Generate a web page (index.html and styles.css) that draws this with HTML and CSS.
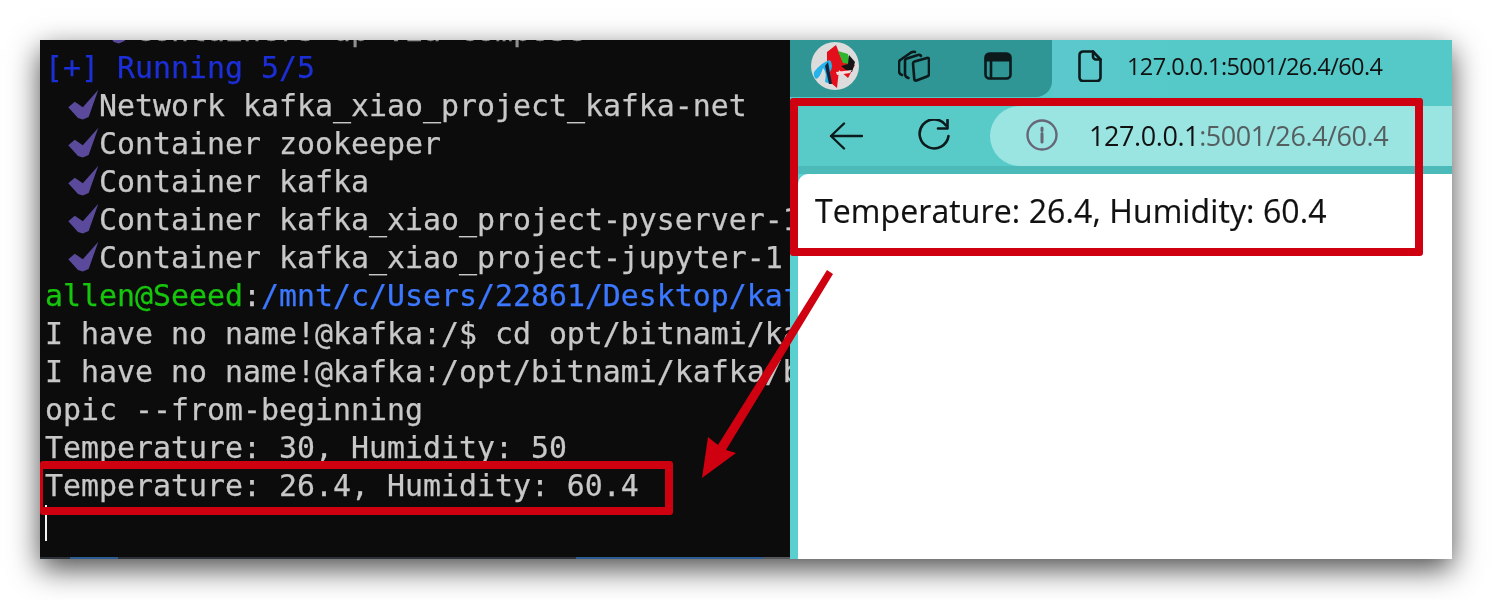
FILE: index.html
```html
<!DOCTYPE html>
<html lang="en">
<head>
<meta charset="utf-8">
<title>Kafka terminal and browser result</title>
<link rel="stylesheet" href="styles.css">
</head>
<body>
<main class="shot">
  <section class="terminal">
    <div class="lines">
      <div class="line clip-top indent"><svg class="check" viewBox="0 0 32 38"><polygon points="0.3,20.3 7,14.7 15.3,20.3 31.3,2.3 21.3,30.3 15.3,33 10.3,31.3"/></svg><span class="sliver">Containers up via compose</span></div>
      <div class="line run">[+] Running 5/5</div>
      <div class="line item"><svg class="check" viewBox="0 0 32 38"><polygon points="0.3,20.3 7,14.7 15.3,20.3 31.3,2.3 21.3,30.3 15.3,33 10.3,31.3"/></svg><span>Network kafka_xiao_project_kafka-net</span></div>
      <div class="line item"><svg class="check" viewBox="0 0 32 38"><polygon points="0.3,20.3 7,14.7 15.3,20.3 31.3,2.3 21.3,30.3 15.3,33 10.3,31.3"/></svg><span>Container zookeeper</span></div>
      <div class="line item"><svg class="check" viewBox="0 0 32 38"><polygon points="0.3,20.3 7,14.7 15.3,20.3 31.3,2.3 21.3,30.3 15.3,33 10.3,31.3"/></svg><span>Container kafka</span></div>
      <div class="line item"><svg class="check" viewBox="0 0 32 38"><polygon points="0.3,20.3 7,14.7 15.3,20.3 31.3,2.3 21.3,30.3 15.3,33 10.3,31.3"/></svg><span>Container kafka_xiao_project-pyserver-1</span></div>
      <div class="line item"><svg class="check" viewBox="0 0 32 38"><polygon points="0.3,20.3 7,14.7 15.3,20.3 31.3,2.3 21.3,30.3 15.3,33 10.3,31.3"/></svg><span>Container kafka_xiao_project-jupyter-1</span></div>
      <div class="line"><span class="green">allen@Seeed</span>:<span class="blue">/mnt/c/Users/22861/Desktop/kafka_xiao_project</span></div>
      <div class="line">I have no name!@kafka:/$ cd opt/bitnami/kafka/bin</div>
      <div class="line">I have no name!@kafka:/opt/bitnami/kafka/bin$ ./kafka-console-consumer.sh</div>
      <div class="line">opic --from-beginning</div>
      <div class="line">Temperature: 30, Humidity: 50</div>
      <div class="line">Temperature: 26.4, Humidity: 60.4</div>
      <div class="line"><span class="cursor"></span></div>
    </div>
    <div class="taskbar-edge"></div>
  </section>

  <section class="browser">
    <header class="titlebar">
      <div class="tab-group">
        <svg class="avatar" viewBox="0 0 50 48">
          <circle cx="25" cy="24" r="24" fill="#dcdcdc"/>
          <path d="M17 10 L26 3 L32 18 L45 23 L38 36 L29 28 L27 46 L21 41 L17 20Z" fill="#e3101c"/>
          <path d="M28 9 L38 12 L40 22 L33 21Z" fill="#2fb52f"/>
          <path d="M39 13 L45 20 L42 30 L36 28 L31 24 L38 22Z" fill="#151515"/>
          <path d="M4 30 Q12 20 20 18 Q24 24 20 30 L21 42 L15 40 Q17 30 13 26 Q10 36 6 37 Q3 34 4 30Z" fill="#24b4ea"/>
          <path d="M18 20 L22 42 L19 42 L15 24Z" fill="#14233a"/>
          <path d="M26 30 L42 28 L40 31 L27 33Z" fill="#f4dede"/>
        </svg>
        <svg class="stack" viewBox="0 0 32 32" fill="none">
          <path d="M15 13.5 Q15 12 16.5 11.5 L29 8 Q31 7.500 31 9.500 V24 Q31 26 29 26.500 L18.500 30.500 Q16.500 31 16.300 29 Z"/>
          <path d="M10.500 28 Q7 27 7 24 V11 Q7 9 9 8.500 L20 5 Q22.500 4.500 23 6"/>
          <path d="M4 25 Q1 24 1 21 V13 Q1 10 3 9.500 L13 2.500 Q15.500 1.200 17 2"/>
        </svg>
        <svg class="win" viewBox="0 0 28 28" fill="none">
          <rect x="1.500" y="1.500" width="25" height="25" rx="4"/>
          <path class="win-fill" d="M1.500 6 a4.500 4.500 0 0 1 4.500-4.500 h16 a4.500 4.500 0 0 1 4.500 4.500 v3 h-25z"/>
          <path d="M7 9 V26"/>
        </svg>
      </div>
      <div class="tab">
        <svg class="doc" viewBox="0 0 24 32" fill="none">
          <path d="M5 1.500 H15 L22.500 9.500 V27.500 a3.500 3.500 0 0 1-3.500 3.500 H5 a3.500 3.500 0 0 1-3.500-3.500 V5 a3.500 3.500 0 0 1 3.500-3.500z"/>
          <path d="M15 1.500 V6.500 a3 3 0 0 0 3 3 h4.500"/>
        </svg>
        <span class="tab-title">127.0.0.1:5001/26.4/60.4</span>
      </div>
    </header>
    <nav class="toolbar">
      <svg class="back" viewBox="0 0 34 28" fill="none"><path d="M33 14 H2 M15 1.500 L2 14 L15 26.500"/></svg>
      <svg class="reload" viewBox="0 0 34 32" fill="none"><path d="M29 6.500 A14.500 14.500 0 1 0 31.500 17"/><path d="M30.500 1 V9.500 H21"/></svg>
      <div class="omnibox">
        <svg class="info" viewBox="0 0 32 32" fill="none"><circle cx="16" cy="16" r="14.500"/><path d="M16 14.500 V23 M16 9 V11.500"/></svg>
        <span class="url"><span class="host">127.0.0.1</span>:5001/26.4/60.4</span>
      </div>
    </nav>
    <div class="viewport">
      <p class="page">Temperature: 26.4, Humidity: 60.4</p>
    </div>
  </section>

  <div class="mark mark-term"></div>
  <div class="mark mark-page"></div>
  <svg class="arrow" viewBox="0 0 140 215"><polygon points="127,1 133,5 26,181 36,184 2,209 8,168 18,176"/></svg>
</main>
</body>
</html>
```

FILE: styles.css
```css
* { box-sizing: border-box; }
html, body { margin: 0; height: 100%; background: #fff; overflow: hidden; }
body { padding: 40px; }

.shot {
  position: relative;
  display: flex;
  width: 1412px;
  height: 519px;
  box-shadow: 0 10px 28px rgba(0, 0, 0, .7);
}

/* terminal */
.terminal {
  width: 750px;
  display: flex;
  flex-direction: column;
  background: #0c0c0c;
  overflow: hidden;
  font: 29.9px/38px "DejaVu Sans Mono", monospace;
  color: #c8c8c8;
  -webkit-text-stroke: .25px currentColor;
}
.lines {
  flex: 1;
  min-height: 0;
  margin-top: -29px;
  padding-left: 5px;
  filter: blur(.5px);
}
.line { height: 38px; white-space: pre; display: flex; }
.line > span { flex: none; }
.sliver { transform: translateY(.5px); opacity: .7; }
.run { color: #1c2fd6; }
.green { color: #16c60c; }
.blue { color: #3b78ff; }
.item { padding-left: 23px; }
.indent { padding-left: 59px; }
.check { width: 31px; height: 38px; flex: none; overflow: visible; fill: #5b4a9c; }
.cursor { width: 2px; height: 36px; background: #f2f2f2; }
.taskbar-edge {
  height: 2px;
  flex: none;
  background: linear-gradient(90deg, #2d3338 0 30px, #2c5c94 30px 78px, #2d3338 78px 536px, #2c5c94 536px 723px, #55585a 723px);
}

/* browser */
.browser {
  flex: 1;
  display: flex;
  flex-direction: column;
  background: #59cfd0;
  font-family: "Open Sans", sans-serif;
  color: #111;
}
.titlebar { display: flex; height: 66px; flex: none; background: #55c9c8; }
.tab-group {
  width: 262px;
  height: 57px;
  flex: none;
  display: flex;
  align-items: center;
  padding: 0 0 5px 20px;
  background: #2f9595;
  border-bottom-right-radius: 16px;
}
.avatar { width: 50px; height: 48px; flex: none; }
.stack { width: 32px; height: 32px; flex: none; margin-left: 38px; }
.stack path, .win rect, .win path, .doc path, .back path, .reload path {
  stroke: #0d1a1c;
  stroke-width: 2.6;
  stroke-linecap: round;
  stroke-linejoin: round;
}
.win { width: 28px; height: 28px; flex: none; margin-left: 54px; }
.win .win-fill { fill: #0d1a1c; stroke-width: 1; }
.tab {
  flex: 1;
  height: 57px;
  display: flex;
  align-items: center;
  padding: 0 0 5px 26px;
  background: linear-gradient(90deg, #5cc8cd, #55c9c8 120px);
}
.doc { width: 24px; height: 32px; flex: none; }
.tab-title { margin-left: 25px; font-size: 23.5px; letter-spacing: -.58px; filter: blur(.3px); }

.toolbar {
  display: flex;
  height: 68px;
  flex: none;
  align-items: flex-start;
  background: #58cbc9;
  border-bottom: 8px solid #4cbab8;
}
.back { width: 34px; height: 28px; flex: none; margin: 16px 0 0 39px; }
.back path { stroke-width: 2.4; }
.reload { width: 34px; height: 32px; flex: none; margin: 13px 0 0 54px; }
.omnibox {
  flex: 1;
  height: 60px;
  margin-left: 39px;
  display: flex;
  align-items: center;
  padding: 0 0 2px 36px;
  background: #9ae4e1;
  border-radius: 30px 0 0 30px;
}
.info { width: 32px; height: 32px; flex: none; }
.info circle, .info path { stroke: #667; stroke-width: 2.4; stroke-linecap: round; }
.info path { stroke-width: 3; }
.url { margin-left: 31px; font-size: 27px; letter-spacing: -.42px; color: #555f60; filter: blur(.3px); }
.host { color: #111; }

.viewport { flex: 1; padding-left: 8px; min-height: 0; }
.page {
  margin: 0;
  height: 100%;
  padding: 15px 0 0 17px;
  background: #fff;
  border-top-left-radius: 10px;
  font-size: 32px;
  line-height: 44px;
  letter-spacing: .1px;
  -webkit-text-stroke: .2px currentColor;
  filter: blur(.3px);
}

/* annotations */
.mark { position: absolute; border: 8px solid #cf0010; border-radius: 3px; }
.mark-term { left: 0; top: 421px; width: 633px; height: 54px; border-left-width: 3px; }
.mark-page { left: 750px; top: 58px; width: 633px; height: 158px; }
.arrow { position: absolute; left: 660px; top: 229px; width: 140px; height: 215px; fill: #cf0010; }
```
